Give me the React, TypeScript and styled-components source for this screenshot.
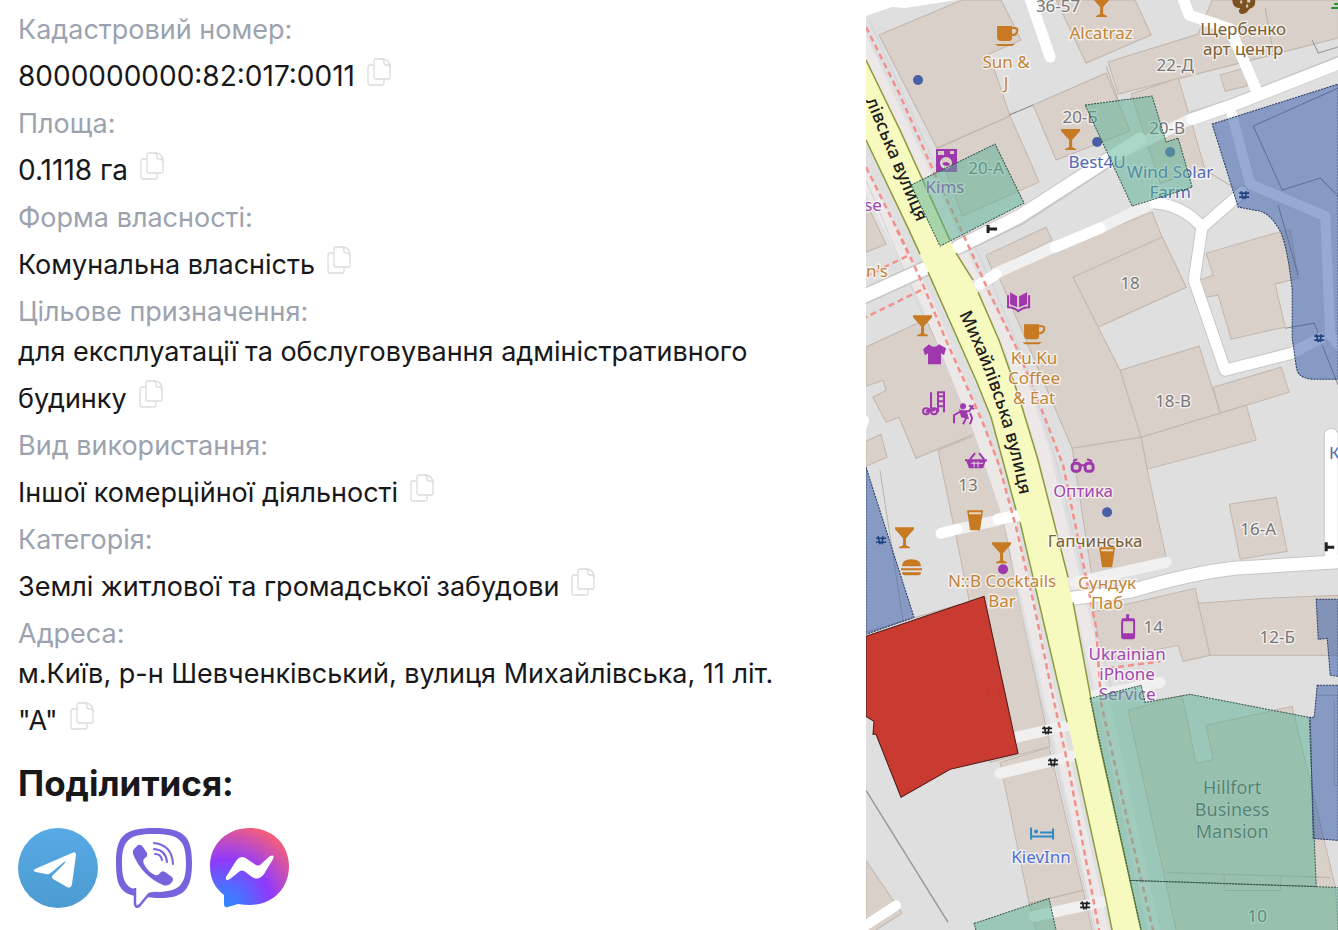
import React from "react";
import styled, { createGlobalStyle } from "styled-components";

const GlobalStyle = createGlobalStyle`
  *, *::before, *::after { box-sizing: border-box; }
  body {
    margin: 0;
    background: #fff;
    color: #18181a;
    font-family: Inter, "Liberation Sans", sans-serif;
  }
`;

const Page = styled.main`
  display: grid;
  grid-template-columns: minmax(0, 11fr) minmax(0, 6fr);
  min-height: 100vh;
`;

const Details = styled.section`
  padding: 10px 48px 16px 18px;
`;

const Fields = styled.dl`
  margin: 0;
  font-size: 27px;
  line-height: 40px;
`;

const FieldLabel = styled.dt`
  color: #9ca3af;
`;

const FieldValue = styled.dd<{ $numeric?: boolean }>`
  margin: 0;
  font-size: ${(p) => (p.$numeric ? "28px" : "27px")};
`;

const CopyButton = styled.button`
  display: inline-flex;
  align-items: flex-start;
  width: 24px;
  height: 54px;
  margin: 0 0 0 12px;
  padding: 8px 0 0;
  border: 0;
  background: none;
  vertical-align: baseline;
  cursor: pointer;
`;

const Nowrap = styled.span`
  white-space: nowrap;
`;

const ShareTitle = styled.h2`
  margin: 11px 0 21px;
  font-size: 35px;
  line-height: 48px;
  font-weight: 700;
`;

const ShareList = styled.nav`
  display: flex;
  gap: 16px;
`;

const ShareLink = styled.a`
  display: block;
  width: 80px;
  height: 80px;
`;

const MapPanel = styled.aside`
  background: #dfdfdf;
  overflow: hidden;
`;

const MapDrawing = styled.svg`
  display: block;
  width: 100%;
  height: 100vh;
  font-family: "Noto Sans", "Open Sans", sans-serif;
`;

const MapLabel = styled.text<{ $tone: string; $large?: boolean }>`
  fill: ${(p) => p.$tone};
  font-size: ${(p) => (p.$large ? "18px" : "17px")};
  text-anchor: middle;
  stroke: #ffffffa0;
  stroke-width: ${(p) => (p.$large ? "1px" : "3px")};
  stroke-linejoin: round;
  paint-order: stroke;
`;

const StreetName = styled.text`
  fill: #1c1c1c;
  font-size: 18px;
  font-weight: 500;
`;

const CopyIcon = () => (
  <svg width="24" height="28" viewBox="0 0 24 28" fill="none" stroke="#dcdcdc" strokeWidth="1.3" strokeLinejoin="round">
    <path d="M7 7H3Q1 7 1 9V25Q1 27 3 27H15Q17 27 17 25V21" />
    <path d="M9 1H16Q23 2 23 9V19Q23 21 21 21H9Q7 21 7 19V3Q7 1 9 1Z" />
    <path d="M14 1Q17 1 17 4V5Q17 7 19 7H20Q23 7 23 10" />
  </svg>
);

const fields = [
  { label: "Кадастровий номер:", text: "", last: "8000000000:82:017:0011", numeric: true },
  { label: "Площа:", text: "0.1118 ", last: "га", numeric: true },
  { label: "Форма власності:", text: "Комунальна ", last: "власність" },
  { label: "Цільове призначення:", text: "для експлуатації та обслуговування адміністративного ", last: "будинку" },
  { label: "Вид використання:", text: "Іншої комерційної ", last: "діяльності" },
  { label: "Категорія:", text: "Землі житлової та громадської ", last: "забудови" },
  { label: "Адреса:", text: "м.Київ, р-н Шевченківський, вулиця Михайлівська, 11 літ. ", last: "\"А\"" },
];

const TelegramLogo = () => (
  <svg width="80" height="80" viewBox="0 0 80 80">
    <defs>
      <linearGradient id="telegram" x1="0" y1="0" x2="0" y2="1">
        <stop offset="0" stopColor="#58aae6" />
        <stop offset="1" stopColor="#4c9bd0" />
      </linearGradient>
    </defs>
    <circle cx="40" cy="40" r="40" fill="url(#telegram)" />
    <path d="M17 41Q14 43 18 44L28 46Q31 47 34 44L46 34Q49 32 46 36L35 47Q33 49 35 51L49 59Q53 61 54 56L58 27Q58 23 54 25Z" fill="#fff" />
  </svg>
);

const ViberLogo = () => (
  <svg width="80" height="80" viewBox="0 0 80 80" fill="none" stroke="#7664dc">
    <path d="M2 35C2 8 10 0 40 0C70 0 78 8 78 35C78 61 70 70 47 70H42L32 69L21 68C6 65 2 56 2 35Z" fill="#7664dc" stroke="none" />
    <path d="M8 35C8 12 15 6 40 6C65 6 72 12 72 35C72 57 65 63 45 64L30 67L24 62C12 60 8 53 8 35Z" fill="#fff" stroke="none" />
    <path d="M21 60V76Q22 81 26 77L35 66Q39 65 44 65" fill="#fff" strokeWidth="2.500" />
    <path d="M23 58H34V64H23Z" fill="#fff" stroke="none" />
    <path d="M20 21L24 17Q27 16 29 19L33 25Q34 28 31 30Q28 32 30 36Q34 44 41 47Q44 48 46 45Q48 42 51 44L58 49Q60 51 58 54Q54 59 49 57Q28 48 19 26Q18 23 20 21Z" fill="#7664dc" stroke="none" />
    <g strokeWidth="2" strokeLinecap="round">
      <path d="M40 15Q58 17 59 36" />
      <path d="M40 21Q52 22 53 34" />
      <path d="M41 26Q47 26 48 32" />
    </g>
  </svg>
);

const MessengerLogo = () => (
  <svg width="80" height="80" viewBox="0 0 80 80">
    <defs>
      <radialGradient id="messenger" gradientUnits="userSpaceOnUse" cx="14" cy="80" r="88">
        <stop offset="0" stopColor="#2d8bff" />
        <stop offset="0.250" stopColor="#4f6dff" />
        <stop offset="0.550" stopColor="#9039fb" />
        <stop offset="0.720" stopColor="#b649cf" />
        <stop offset="1" stopColor="#f85f73" />
      </radialGradient>
    </defs>
    <path d="M40 0C63 0 79 17 79 38C79 61 62 77 40 77Q34 77 28 76L18 79Q14 80 14 76V67C5 60 0 51 0 38C0 16 17 0 40 0Z" fill="url(#messenger)" />
    <path d="M16 49L26 33Q31 26 37 31L46 37Q48 38 50 37L60 28Q65 26 63 31L54 46Q49 53 42 49L34 43Q32 42 30 43L20 51Q15 54 16 49Z" fill="#fff" />
  </svg>
);

const networks = [
  { name: "Telegram", Logo: TelegramLogo },
  { name: "Viber", Logo: ViberLogo },
  { name: "Messenger", Logo: MessengerLogo },
];

const buildings = [
  "879,35 962,0 1001,0 1021,40 989,54 1010,116 937,148",
  "938,148 1010,116 1039,182 962,216",
  "1056,0 1135,0 1151,35 1086,63",
  "1108,62 1198,34 1212,0 1338,0 1338,38 1118,94",
  "1220,75 1244,68 1247,86 1225,91",
  "1033,105 1106,73 1130,131 1056,160",
  "1131,94 1178,78 1193,128 1205,170 1160,183",
  "866,202 886,244 866,252",
  "986,255 1046,227 1052,240 992,270",
  "999,277 1060,248 1152,212 1162,237 1186,287 1098,327 1120,370 1141,437 1072,448",
  "1073,277 1162,237 1186,287 1098,327",
  "1120,370 1199,346 1220,413 1141,437",
  "1213,387 1281,367 1289,392 1220,413",
  "1141,437 1246,405 1256,440 1147,469",
  "1206,253 1275,233 1290,230 1298,278 1275,284 1285,327 1231,339 1218,295 1205,297 1200,280 1213,275",
  "1072,448 1141,437 1147,469 1166,557 1092,577",
  "1229,504 1276,497 1287,551 1240,559",
  "1092,612 1195,588 1210,655 1183,661 1178,645 1105,660",
  "1198,603 1265,598 1338,595 1338,655 1210,655",
  "866,347 926,319 978,432 916,458 899,417 886,422 873,397 886,390 883,380 866,386",
  "866,441 881,434 887,457 866,466",
  "938,450 977,434 1000,500 1015,583 1050,746 990,762 968,594",
  "1000,762 1049,747 1083,890 1029,903",
  "1029,903 1083,890 1092,930 1036,930",
  "866,860 902,913 875,930 866,930",
  "1128,710 1182,695 1196,763 1213,759 1206,725 1292,706 1335,886 1338,930 1176,930",
];

const Glass = ({ x, y }: { x: number; y: number }) => (
  <g transform={`translate(${x} ${y})`} fill="#c77a22">
    <path d="M0 0H19V2L11 11V18L15 20V21H4V20L8 18V11L0 2Z" />
  </g>
);

const Cup = ({ x, y }: { x: number; y: number }) => (
  <g transform={`translate(${x} ${y})`}>
    <path d="M2 0H17V12Q17 15 14 15H6Q2 15 2 11ZM0 18H20L17 20H3Z" fill="#c77a22" />
    <path d="M17 2H20Q23 2 22 6Q21 9 17 9" fill="none" stroke="#c77a22" strokeWidth="2" />
  </g>
);

const Beer = ({ x, y }: { x: number; y: number }) => (
  <g transform={`translate(${x} ${y})`}>
    <path d="M0 0H16L13 20H3Z" fill="#c77a22" />
    <path d="M2 3H14" stroke="#ead8c1" strokeWidth="2" />
  </g>
);

const Gate = ({ x, y, tone = "#222" }: { x: number; y: number; tone?: string }) => (
  <path d={`M${x - 5} ${y - 2}H${x + 5}M${x - 5} ${y + 2}H${x + 5}M${x - 3} ${y - 4}L${x - 1} ${y + 4}M${x + 2} ${y - 4}L${x + 1} ${y + 4}`} stroke={tone} strokeWidth="1.700" />
);

const brown = "#c28436";
const purple = "#a347ae";
const gray = "#777";
const blue = "#5469b0";
const olive = "#7b6035";

const labels: [string, number, number, string][] = [
  ["36-57", 1058, 12, gray],
  ["Alcatraz", 1101, 39, brown],
  ["Sun &", 1006, 68, brown],
  ["J", 1006, 89, brown],
  ["Щербенко", 1243, 35, olive],
  ["арт центр", 1243, 55, olive],
  ["22-Д", 1175, 71, gray],
  ["20-Б", 1080, 123, gray],
  ["20-В", 1167, 134, gray],
  ["20-А", 986, 174, gray],
  ["Kims", 945, 193, purple],
  ["Best4U", 1097, 168, blue],
  ["Wind Solar", 1170, 178, blue],
  ["Farm", 1170, 198, blue],
  ["18", 1130, 289, gray],
  ["Ku.Ku", 1034, 364, brown],
  ["Coffee", 1034, 384, brown],
  ["& Eat", 1034, 404, brown],
  ["18-В", 1173, 407, gray],
  ["13", 968, 491, gray],
  ["Оптика", 1083, 497, purple],
  ["Гапчинська", 1095, 547, olive],
  ["16-А", 1258, 535, gray],
  ["N::B Cocktails", 1002, 587, brown],
  ["Bar", 1002, 607, brown],
  ["Сундук", 1107, 589, brown],
  ["Паб", 1107, 609, brown],
  ["14", 1153, 633, gray],
  ["12-Б", 1277, 643, gray],
  ["Ukrainian", 1127, 660, purple],
  ["iPhone", 1127, 680, purple],
  ["Service", 1127, 700, purple],
  ["KievInn", 1041, 863, "#4f70d8"],
  ["10", 1257, 922, "#666"],
  ["se", 873, 211, purple],
  ["n's", 877, 277, brown],
  ["К", 1334, 459, blue],
];

const CadastreMap = () => (
  <MapDrawing viewBox="866 0 472 930" preserveAspectRatio="xMinYMin slice" role="img" aria-label="Кадастрова карта">
    <defs>
      <path id="street-upper" d="M848 58L863 94Q884 145 930 253" />
      <path id="street-lower" d="M959 314Q1004 405 1021 504" />
    </defs>
    <rect x="866" width="472" height="930" fill="#dfdfdf" />
    <g fill="#d9d0c9" stroke="#c3b6ac" strokeWidth="1">
      {buildings.map((points) => <polygon key={points} points={points} />)}
    </g>
    <g fill="none" stroke="#bdb1a8">
      <path d="M1265 8L1273 52M1205 170L1238 190M1106 66L1118 100" />
      <path d="M1312 40L1318 53L1338 47" stroke="#999" />
      <path d="M1338 88L1253 126L1282 190L1320 178L1338 196M1278 205L1298 275M1285 328L1314 323L1320 338M1322 345L1338 385" stroke="#8e8e94" />
      <path d="M880 470L903 620M866 632L960 604M1316 695H1338V785H1334V700M1166 872L1330 877M1224 875V890H1280V877" />
      <path d="M866 790L948 922" stroke="#999" strokeWidth="1.500" />
      <path d="M1009 115L1033 105" stroke="#888" />
    </g>

    <g fill="none" stroke="#ebe8e7" strokeWidth="12">
      <path d="M858 32L932 190L976 285L1010 348L1042 446L1066 545L1098 676L1156 940" />
      <path d="M858 164L926 300L980 432L1009 518L1060 740L1105 940" />
    </g>
    <g fill="none" stroke="#d0d3d7" strokeWidth="1">
      <path d="M870 22L946 189L990 278L1026 365L1056 461L1080 560L1114 700" />
      <path d="M866 180L918 303L973 436L1001 523L1052 747L1094 930" />
    </g>

    <path d="M866 0H956L905 8L892 7L866 16Z" fill="#fff" />
    <g fill="none" stroke="#c9c6c4" strokeLinecap="round" strokeLinejoin="round">
      <path d="M1338 63L1230 106L1192 118" strokeWidth="14" />
      <path d="M1107 160L1020 217L958 247M926 268L860 298" strokeWidth="16" />
      <path d="M1072 598L1130 591Q1190 573 1234 568L1345 561M1331 435V560" strokeWidth="15" />
      <path d="M1155 203Q1182 205 1202 227L1242 192M1202 226L1194 280L1225 370L1292 353" strokeWidth="13" />
    </g>
    <g fill="none" stroke="#f1f0f0" strokeWidth="11" strokeLinecap="round" strokeLinejoin="round">
      <path d="M1190 119L1107 160M1054 247L996 273M1150 204L1100 228" />
      <path d="M957 529L997 520M1000 773L1074 755M1012 738L1068 725M1034 916L1104 901M1075 582L1166 562" />
      <path d="M1092 696L1160 682" />
    </g>
    <g fill="none" stroke="#fff" strokeLinecap="round" strokeLinejoin="round">
      <path d="M1029 -4L1050 57M1182 -4L1189 15L1230 29L1257 92" strokeWidth="11" />
      <path d="M1345 61L1230 106L1192 119" strokeWidth="12" />
      <path d="M1140 139L1107 160L1020 216L958 247M926 268L860 298" strokeWidth="13" />
      <path d="M980 284L996 274M1055 247L1100 228M941 533L957 529M998 519L1018 515" strokeWidth="11" />
      <path d="M1155 203Q1182 205 1202 227L1242 192M1202 226L1194 280L1225 370L1292 353L1320 338" strokeWidth="11" />
      <path d="M1231 112L1250 184L1325 216L1330 335L1345 352" strokeWidth="10" />
      <path d="M1072 598L1130 591Q1190 573 1234 568L1345 561M1331 435V560" strokeWidth="13" />
      <path d="M864 926L896 905M862 426L864 420" strokeWidth="10" />
    </g>

    <g fill="none" stroke="#f3908c" strokeWidth="2.500" strokeDasharray="6 4">
      <path d="M866 27L899 93L933 170L969 247L988 290L1016 347L1033 387L1063 465L1079 543L1096 627L1101 703L1128 823L1153 930" />
      <path d="M866 167L899 233L921 280L946 340L983 423L999 465L1016 527L1033 600L1053 697L1069 770L1099 930" />
      <path d="M897 230L909 255L866 276M921 290L866 317M1108 668L1160 661" />
    </g>

    <path d="M866 60L900 130L956 253L973 283L999 340L1019 397L1038 460L1068 580L1098 737L1141 930H1112L1104 890L1074 750L1019 517L1004 465L991 417L976 380L928 272L909 230L866 140Z" fill="#f7fabf" />
    <g fill="none" stroke="#8b9b3d" strokeWidth="1.500">
      <path d="M866 60L900 130L950 240M956 253L973 280M978 292L999 340L1019 397L1038 460L1068 577M1073 602L1098 737L1141 930" />
      <path d="M866 140L909 230L920 254M928 272L976 380L991 417L1004 465L1016 510M1020 522L1067 722M1075 758L1104 890L1112 930" />
    </g>

    <StreetName><textPath href="#street-upper" startOffset="46">лівська вулиця</textPath></StreetName>
    <StreetName><textPath href="#street-lower">Михайлівська вулиця</textPath></StreetName>

    {labels.map(([text, x, y, tone]) => <MapLabel key={text} x={x} y={y} $tone={tone}>{text}</MapLabel>)}
    <MapLabel x="994" y="700" $tone={gray}>11</MapLabel>
    <MapLabel x="1232" y="794" $tone="#555" $large>Hillfort</MapLabel>
    <MapLabel x="1232" y="816" $tone="#555" $large>Business</MapLabel>
    <MapLabel x="1232" y="838" $tone="#555" $large>Mansion</MapLabel>

    <Glass x={1092} y={-4} />
    <Glass x={1061} y={129} />
    <Glass x={913} y={315} />
    <Glass x={895} y={527} />
    <Glass x={992} y={542} />
    <Cup x={995} y={26} />
    <Cup x={1022} y={324} />
    <Beer x={967} y={510} />
    <Beer x={1099} y={547} />
    <path d="M902 566Q902 559 911 559Q921 559 921 566ZM901 568H922V570H901ZM902 572H921Q921 575 918 575H905Q902 575 902 572Z" fill="#c77a22" />
    <path d="M1232 0H1255Q1256 7 1249 9Q1247 14 1241 14Q1237 12 1240 8Q1233 9 1232 0Z" fill="#7b5220" />
    <path d="M1240 2H1242M1247 1H1250M1246 6H1248" stroke="#d9d0c9" strokeWidth="3" />
    <path d="M1331 8H1338M1334 4H1338" stroke="#209432" strokeWidth="2" />

    <g fill="#a038ad">
      <path fillRule="evenodd" d="M936 149H957V172H936ZM938 151V155H944V151ZM950 151V154H954V151ZM946 157A6 6 0 1 0 946 169A6 6 0 1 0 946 157ZM942 164Q946 160 950 164Q948 168 942 164Z" />
      <path d="M1010 292L1017 296V307L1010 304ZM1019 296L1027 292V304L1019 307Z" />
      <path d="M923 349L929 344Q934 349 939 344L946 348L944 355L941 353V364H928V353L925 355Z" />
      <path d="M966 460H986L983 468H969Z" />
      <circle cx="1003" cy="569" r="5" />
      <path fillRule="evenodd" d="M1122 618H1126V614H1129V618H1133Q1135 618 1135 621V636Q1135 639 1133 639H1123Q1121 639 1121 636V621ZM1123 621V633H1133V621Z" />
      <circle cx="963" cy="406" r="3" />
      <path d="M959 409L967 412L969 419L961 417Z" />
    </g>
    <g fill="none" stroke="#a038ad" strokeWidth="2">
      <path d="M1008 295V307Q1014 307 1018 311Q1023 307 1029 307V295" />
      <path d="M931 392V408M938 391V412M944 391V412M938 392H945M938 396H945M938 401H945M938 406H945M930 408L926 412M930 410H935" />
      <circle cx="926" cy="411" r="3" />
      <circle cx="934" cy="411" r="3" />
      <path d="M954 423V415L961 411H969L973 405M961 411L966 418L963 424M970 413L972 418L970 424M969 405L974 409" />
      <path d="M965 460H987M970 459L975 453M984 459L979 453" />
      <path d="M1073 461L1077 459M1087 459L1092 461M1080 465H1085" />
      <rect x="1072" y="463" width="8" height="8" rx="3" strokeWidth="3" />
      <rect x="1085" y="463" width="8" height="8" rx="3" strokeWidth="3" />
    </g>
    <path d="M971 463H983M974 461V467M978 461V467" stroke="#e3d3df" strokeWidth="1" />
    <g fill="#4860a8">
      <circle cx="918" cy="80" r="5" />
      <circle cx="1097" cy="142" r="5" />
      <circle cx="1170" cy="152" r="5" />
      <circle cx="1107" cy="512" r="5" />
    </g>
    <g stroke="#2f8ac5" strokeWidth="2" fill="none">
      <path d="M1031 827V839M1031 836H1053M1053 828V839M1040 832H1052" />
      <circle cx="1036" cy="831" r="1" />
    </g>
    <Gate x={1047} y={730} />
    <Gate x={1053} y={762} />
    <Gate x={1085} y={905} />
    <Gate x={1244} y={195} tone="#1d2f59" />
    <Gate x={1319} y={338} tone="#1d2f59" />
    <Gate x={881} y={540} tone="#1d2f59" />
    <path d="M987 229H997M988 225V233M1326 547H1334M1326 542V551" stroke="#222" strokeWidth="3" />

    <g fill="#57b093" fillOpacity="0.500" stroke="#33554a" strokeWidth="1" strokeDasharray="2 1">
      <polygon points="911,185 995,144 1024,203 940,246" />
      <polygon points="1085,105 1152,96 1166,142 1178,138 1192,187 1132,206" />
      <polygon points="1090,698 1141,685 1145,702 1190,694 1309,717 1316,886 1130,880" />
      <polygon points="1130,880 1338,887 1338,930 1141,930" />
      <polygon points="974,923 1049,898 1056,930 976,930" />
    </g>
    <g fill="#2d56a7" fillOpacity="0.500" stroke="#24365f" strokeWidth="1" strokeDasharray="2 1">
      <path d="M1212 124L1338 84V379H1312Q1297 378 1296 366L1292 338V290Q1286 235 1276 225Q1268 211 1254 210L1238 207Z" />
      <polygon points="866,467 914,617 866,634" />
      <polygon points="1316,599 1338,599 1338,676 1330,675 1327,638 1318,639" />
      <polygon points="1317,685 1338,685 1338,840 1313,838 1310,717 1314,717" />
    </g>
    <polygon points="866,636 984,596 1018,753 950,769 901,797 876,734 873,734 874,721 866,716" fill="#c8352b" fillOpacity="0.970" stroke="#4a1714" strokeWidth="1" />
  </MapDrawing>
);

export default function App() {
  return (
    <>
      <GlobalStyle />
      <Page>
        <Details>
          <Fields>
            {fields.map(({ label, text, last, numeric }) => (
              <React.Fragment key={label}>
                <FieldLabel>{label}</FieldLabel>
                <FieldValue $numeric={numeric}>
                  {text}
                  <Nowrap>
                    {last}
                    <CopyButton type="button" aria-label={`Копіювати: ${label}`}>
                      <CopyIcon />
                    </CopyButton>
                  </Nowrap>
                </FieldValue>
              </React.Fragment>
            ))}
          </Fields>
          <ShareTitle>Поділитися:</ShareTitle>
          <ShareList aria-label="Поділитися">
            {networks.map(({ name, Logo }) => (
              <ShareLink key={name} href={`#${name.toLowerCase()}`} aria-label={name}>
                <Logo />
              </ShareLink>
            ))}
          </ShareList>
        </Details>
        <MapPanel>
          <CadastreMap />
        </MapPanel>
      </Page>
    </>
  );
}
